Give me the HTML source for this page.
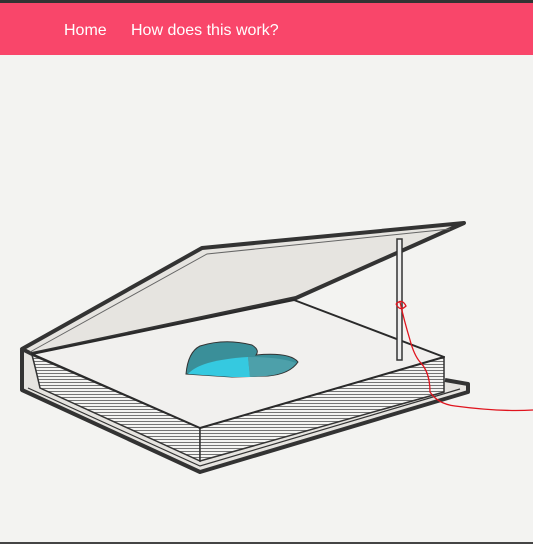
<!DOCTYPE html>
<html><head><meta charset="utf-8"><style>
html,body{margin:0;padding:0;width:533px;height:544px;overflow:hidden;background:#f3f3f1;font-family:"Liberation Sans",sans-serif}
.top{height:3px;background:#333}
.nav{height:52px;background:#f9466a;position:relative}
.nav a{position:absolute;top:19px;color:#fff;font-size:16px;text-decoration:none}
svg{position:absolute;left:0;top:0}
</style></head><body>
<div class="top"></div>
<div class="nav"><a style="left:64px">Home</a><a style="left:131px">How does this work?</a></div>
<svg width="533" height="544" viewBox="0 0 533 544">
<defs>
<pattern id="pg" width="6" height="3" patternUnits="userSpaceOnUse"><rect width="6" height="3" fill="#f4f4f2"/><line x1="0" y1="1.5" x2="6" y2="1.5" stroke="#555" stroke-width="0.8"/></pattern>
</defs>
<path d="M22,350 L22,390 L200,472 L468,392 L468,384 L445,380" fill="#e6e4e0" stroke="#333" stroke-width="4" stroke-linejoin="round"/>
<path d="M28,388 L200,466 L460,389" fill="none" stroke="#333" stroke-width="1.2"/>
<path d="M22,349 L202,248 L464,223 L296,298 L32,354 Z" fill="#e6e4e0" stroke="#333" stroke-width="4" stroke-linejoin="round"/>
<path d="M30,352 L207,254 L450,229" fill="none" stroke="#666" stroke-width="1"/>
<path d="M32,355 L200,428 L200,461 L40,388 Q36,370 32,355 Z" fill="url(#pg)" stroke="#333" stroke-width="1.5"/>
<path d="M200,428 L444,357 L444,392 L200,461 Z" fill="url(#pg)" stroke="#333" stroke-width="1.5"/>
<path d="M32,354 L294,300 L444,357 L200,428 Z" fill="#f1f0ee" stroke="#2a2a2a" stroke-width="2" stroke-linejoin="round"/>
<path d="M186,374 Q188,352 200,346 Q225,338 252,345 Q260,350 256,355 Q290,352 298,362 Q290,374 268,376 L232,377 Z" fill="#3a8f99" stroke="#333" stroke-width="1"/>
<path d="M188,374 Q200,360 248,357 L250,377 L232,377 Z" fill="#35c9e0"/>
<path d="M248,357 Q280,357 296,363 Q288,374 266,376 L250,377 Z" fill="#4da0aa"/>
<rect x="397" y="239" width="5" height="121" fill="#eee" stroke="#333" stroke-width="1.5"/>
<path d="M396,304 Q402,298 406,306 Q400,312 396,304 M400,302 Q404,320 410,340 Q414,355 420,362 Q430,372 430,392 Q438,404 455,406 Q500,412 533,410" fill="none" stroke="#e0141e" stroke-width="1.3"/>
<line x1="0" y1="543" x2="533" y2="543" stroke="#444" stroke-width="2"/>
</svg>
</body></html>
